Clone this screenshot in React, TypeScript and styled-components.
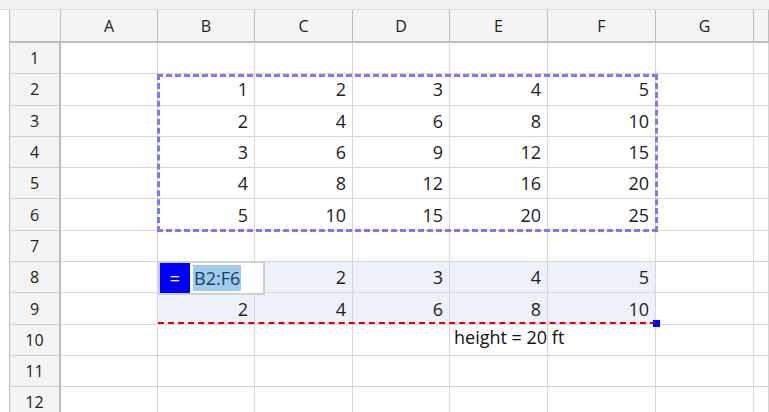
import React from "react";
import styled, { createGlobalStyle } from "styled-components";

const Global = createGlobalStyle`
  body { margin: 0; background: #fff; font-family: "Open Sans", Lato, sans-serif; overflow: hidden; }
`;

const cols = ["A", "B", "C", "D", "E", "F", "G", ""];
const widths = [51, 97, 97, 98, 97, 98, 108, 98, 15];
const ROW = 31.3;

const TopStrip = styled.div`
  height: 9px;
  background: #f2f2f2;
  border-bottom: 1px solid #ddd;
`;

const Sheet = styled.div`
  position: relative;
  margin-left: 9px;
  display: grid;
  grid-template-columns: ${widths.map((w) => w + "px").join(" ")};
  grid-auto-rows: ${ROW}px;
  grid-template-rows: 33px;
  border-left: 1px solid #bbb;
`;

const Head = styled.div`
  background: #f4f4f4;
  border-right: 1px solid #bdbdbd;
  border-bottom: 2px solid #bdbdbd;
  display: flex;
  align-items: center;
  justify-content: center;
  font-size: 16px;
  color: #222;
`;

const RowHead = styled.div`
  background: #f4f4f4;
  border-right: 2px solid #bdbdbd;
  border-bottom: 1px solid #cfcfcf;
  display: flex;
  align-items: center;
  justify-content: center;
  font-size: 16px;
  color: #222;
`;

const Cell = styled.div<{ $fill?: boolean }>`
  background: ${(p) => (p.$fill ? "#edf1f9" : "#fff")};
  border-right: 1px solid #d6d6d6;
  border-bottom: 1px solid #d6d6d6;
  display: flex;
  align-items: center;
  justify-content: flex-end;
  padding-right: 6px;
  font-size: 18px;
  color: #222;
  box-sizing: border-box;
`;

const Overlay = styled.div`
  position: absolute;
  pointer-events: none;
`;

const DashedRange = styled(Overlay)`
  left: 147px;
  top: 64px;
  width: 495px;
  height: 152px;
  border: 3px dashed #7a7af5;
`;

const RedLine = styled(Overlay)`
  left: 148px;
  top: 312px;
  width: 498px;
  border-top: 2px dashed #e00000;
`;

const Handle = styled(Overlay)`
  left: 643px;
  top: 310px;
  width: 7px;
  height: 7px;
  background: #0000ff;
`;

const Editor = styled(Overlay)`
  left: 148px;
  top: 251px;
  width: 103px;
  height: 30px;
  background: #fff;
  border: 2px solid #d0d0d0;
  display: flex;
  align-items: center;
  font-size: 18px;
`;

const Eq = styled.div`
  width: 30px;
  height: 30px;
  background: #0000ff;
  color: #fff;
  display: flex;
  align-items: center;
  justify-content: center;
`;

const Sel = styled.span`
  margin-left: 3px;
  background: #9fcbef;
  color: #1d3d5e;
  padding: 1px 1px;
`;

const Label = styled(Overlay)`
  left: 444px;
  top: 315px;
  font-size: 18px;
  color: #111;
`;

const data: Record<number, (number | "")[]> = {};
for (let r = 2; r <= 6; r++) data[r] = [1, 2, 3, 4, 5].map((c) => c * (r - 1));
data[8] = ["", 2, 3, 4, 5];
data[9] = [2, 4, 6, 8, 10];

export default function App() {
  const rows = Array.from({ length: 12 }, (_, i) => i + 1);
  return (
    <>
      <Global />
      <TopStrip />
      <Sheet>
        <Head />
        {cols.map((c, i) => (
          <Head key={i}>{c}</Head>
        ))}
        {rows.map((r) => (
          <React.Fragment key={r}>
            <RowHead>{r}</RowHead>
            {cols.map((_, ci) => {
              const v = ci >= 1 && ci <= 5 ? data[r]?.[ci - 1] : undefined;
              return (
                <Cell key={ci} $fill={(r === 8 || r === 9) && ci >= 1 && ci <= 5}>
                  {v}
                </Cell>
              );
            })}
          </React.Fragment>
        ))}
        <DashedRange />
        <Editor>
          <Eq>=</Eq>
          <Sel>B2:F6</Sel>
        </Editor>
        <RedLine />
        <Handle />
        <Label>height = 20 ft</Label>
      </Sheet>
    </>
  );
}
